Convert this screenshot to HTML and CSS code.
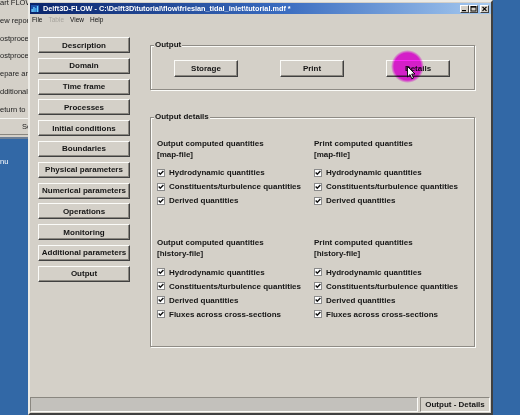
FILE: index.html
```html
<!DOCTYPE html>
<html>
<head>
<meta charset="utf-8">
<title>Delft3D-FLOW</title>
<link rel="stylesheet" href="styles.css">
</head>
<body>
<div class="desk">
  <div class="bg-left">
    <div class="bg-menu">
      <div class="bg-item">art FLOW</div>
      <div class="bg-item">ew report</div>
      <div class="bg-item">ostproces</div>
      <div class="bg-item">ostproces</div>
      <div class="bg-item">epare an</div>
      <div class="bg-item">dditional</div>
      <div class="bg-item bg-last">eturn to D</div>
      <div class="bg-btn">Se</div>
    </div>
    <div class="bg-blue"><span>nu</span></div>
  </div>

  <div class="win">
    <div class="titlebar">
      <svg class="appicon" viewBox="0 0 8 7" width="8" height="7">
        <rect x="0" y="0" width="8" height="7" fill="#1d4fa8"/>
        <rect x="0.5" y="4" width="1.3" height="3" fill="#6fd3ff"/>
        <rect x="2.3" y="2" width="1.3" height="5" fill="#6fd3ff"/>
        <rect x="4.1" y="3" width="1.3" height="4" fill="#3fa9f0"/>
        <rect x="5.9" y="1" width="1.3" height="6" fill="#6fd3ff"/>
      </svg>
      <span class="title">Delft3D-FLOW - C:\Delft3D\tutorial\flow\friesian_tidal_inlet\tutorial.mdf *</span>
      <div class="wbtns">
        <span class="wbtn"><svg viewBox="0 0 9 8" width="9" height="8"><rect x="2" y="5" width="4" height="1.2" fill="#000"/></svg></span>
        <span class="wbtn"><svg viewBox="0 0 9 8" width="9" height="8"><rect x="2" y="1.5" width="5" height="4.5" fill="none" stroke="#000" stroke-width="0.9"/><rect x="2" y="1.5" width="5" height="1.1" fill="#000"/></svg></span>
        <span class="wbtn wclose"><svg viewBox="0 0 9 8" width="9" height="8"><path d="M2.5 1.8 L6.5 5.8 M6.5 1.8 L2.5 5.8" stroke="#000" stroke-width="1.2"/></svg></span>
      </div>
    </div>
    <div class="menubar">
      <span>File</span><span class="dis">Table</span><span>View</span><span>Help</span>
    </div>

    <div class="body">
      <nav class="nav">
        <button class="btn">Description</button>
        <button class="btn">Domain</button>
        <button class="btn">Time frame</button>
        <button class="btn">Processes</button>
        <button class="btn">Initial conditions</button>
        <button class="btn">Boundaries</button>
        <button class="btn">Physical parameters</button>
        <button class="btn">Numerical parameters</button>
        <button class="btn">Operations</button>
        <button class="btn">Monitoring</button>
        <button class="btn">Additional parameters</button>
        <button class="btn">Output</button>
      </nav>

      <div class="main">
        <fieldset class="grp">
          <legend>Output</legend>
          <div class="btnrow">
            <button class="btn obtn">Storage</button>
            <button class="btn obtn">Print</button>
            <button class="btn obtn">Details</button>
          </div>
        </fieldset>

        <fieldset class="grp grp-details">
          <legend>Output details</legend>
          <div class="dgrid">
            <div class="blk">
              <div class="hdr">Output computed quantities<br>[map-file]</div>
              <ul class="checks">
                <li><svg class="cb" viewBox="0 0 8 8"><rect x="0.5" y="0.5" width="7" height="7" fill="#fff" stroke="#8a8a8a"/><path d="M1.7 3.6 L3.3 5.3 L6.4 2.1" fill="none" stroke="#111" stroke-width="1.4"/></svg>Hydrodynamic quantities</li>
                <li><svg class="cb" viewBox="0 0 8 8"><rect x="0.5" y="0.5" width="7" height="7" fill="#fff" stroke="#8a8a8a"/><path d="M1.7 3.6 L3.3 5.3 L6.4 2.1" fill="none" stroke="#111" stroke-width="1.4"/></svg>Constituents/turbulence quantities</li>
                <li><svg class="cb" viewBox="0 0 8 8"><rect x="0.5" y="0.5" width="7" height="7" fill="#fff" stroke="#8a8a8a"/><path d="M1.7 3.6 L3.3 5.3 L6.4 2.1" fill="none" stroke="#111" stroke-width="1.4"/></svg>Derived quantities</li>
              </ul>
            </div>
            <div class="blk">
              <div class="hdr">Print computed quantities<br>[map-file]</div>
              <ul class="checks">
                <li><svg class="cb" viewBox="0 0 8 8"><rect x="0.5" y="0.5" width="7" height="7" fill="#fff" stroke="#8a8a8a"/><path d="M1.7 3.6 L3.3 5.3 L6.4 2.1" fill="none" stroke="#111" stroke-width="1.4"/></svg>Hydrodynamic quantities</li>
                <li><svg class="cb" viewBox="0 0 8 8"><rect x="0.5" y="0.5" width="7" height="7" fill="#fff" stroke="#8a8a8a"/><path d="M1.7 3.6 L3.3 5.3 L6.4 2.1" fill="none" stroke="#111" stroke-width="1.4"/></svg>Constituents/turbulence quantities</li>
                <li><svg class="cb" viewBox="0 0 8 8"><rect x="0.5" y="0.5" width="7" height="7" fill="#fff" stroke="#8a8a8a"/><path d="M1.7 3.6 L3.3 5.3 L6.4 2.1" fill="none" stroke="#111" stroke-width="1.4"/></svg>Derived quantities</li>
              </ul>
            </div>
            <div class="blk">
              <div class="hdr">Output computed quantities<br>[history-file]</div>
              <ul class="checks">
                <li><svg class="cb" viewBox="0 0 8 8"><rect x="0.5" y="0.5" width="7" height="7" fill="#fff" stroke="#8a8a8a"/><path d="M1.7 3.6 L3.3 5.3 L6.4 2.1" fill="none" stroke="#111" stroke-width="1.4"/></svg>Hydrodynamic quantities</li>
                <li><svg class="cb" viewBox="0 0 8 8"><rect x="0.5" y="0.5" width="7" height="7" fill="#fff" stroke="#8a8a8a"/><path d="M1.7 3.6 L3.3 5.3 L6.4 2.1" fill="none" stroke="#111" stroke-width="1.4"/></svg>Constituents/turbulence quantities</li>
                <li><svg class="cb" viewBox="0 0 8 8"><rect x="0.5" y="0.5" width="7" height="7" fill="#fff" stroke="#8a8a8a"/><path d="M1.7 3.6 L3.3 5.3 L6.4 2.1" fill="none" stroke="#111" stroke-width="1.4"/></svg>Derived quantities</li>
                <li><svg class="cb" viewBox="0 0 8 8"><rect x="0.5" y="0.5" width="7" height="7" fill="#fff" stroke="#8a8a8a"/><path d="M1.7 3.6 L3.3 5.3 L6.4 2.1" fill="none" stroke="#111" stroke-width="1.4"/></svg>Fluxes across cross-sections</li>
              </ul>
            </div>
            <div class="blk">
              <div class="hdr">Print computed quantities<br>[history-file]</div>
              <ul class="checks">
                <li><svg class="cb" viewBox="0 0 8 8"><rect x="0.5" y="0.5" width="7" height="7" fill="#fff" stroke="#8a8a8a"/><path d="M1.7 3.6 L3.3 5.3 L6.4 2.1" fill="none" stroke="#111" stroke-width="1.4"/></svg>Hydrodynamic quantities</li>
                <li><svg class="cb" viewBox="0 0 8 8"><rect x="0.5" y="0.5" width="7" height="7" fill="#fff" stroke="#8a8a8a"/><path d="M1.7 3.6 L3.3 5.3 L6.4 2.1" fill="none" stroke="#111" stroke-width="1.4"/></svg>Constituents/turbulence quantities</li>
                <li><svg class="cb" viewBox="0 0 8 8"><rect x="0.5" y="0.5" width="7" height="7" fill="#fff" stroke="#8a8a8a"/><path d="M1.7 3.6 L3.3 5.3 L6.4 2.1" fill="none" stroke="#111" stroke-width="1.4"/></svg>Derived quantities</li>
                <li><svg class="cb" viewBox="0 0 8 8"><rect x="0.5" y="0.5" width="7" height="7" fill="#fff" stroke="#8a8a8a"/><path d="M1.7 3.6 L3.3 5.3 L6.4 2.1" fill="none" stroke="#111" stroke-width="1.4"/></svg>Fluxes across cross-sections</li>
              </ul>
            </div>
          </div>
        </fieldset>
      </div>
    </div>

    <div class="statusbar">
      <div class="panel panel-main"></div>
      <div class="panel panel-right">Output - Details</div>
    </div>
  </div>

  <div class="bg-right"></div>

  <div class="spot"></div>
  <svg class="cursor" viewBox="0 0 9 14" width="9" height="14">
    <path d="M0.5 0.5 L0.5 11 L3 8.6 L4.8 12.8 L6.5 12 L4.7 8 L8 8 Z" fill="#fff" stroke="#000" stroke-width="0.9" stroke-linejoin="round"/>
  </svg>
</div>
</body>
</html>
```

FILE: styles.css
```css
* { box-sizing: border-box; }

html, body {
  margin: 0;
  padding: 0;
}

body {
  width: 520px;
  height: 415px;
  overflow: hidden;
  background: #3268a6;
  font-family: "Liberation Sans", Arial, sans-serif;
  color: #151515;
}

.desk {
  position: relative;
  display: flex;
  width: 520px;
  height: 415px;
}

/* ---------- background application strip ---------- */
.bg-left {
  width: 28px;
  flex: none;
  display: flex;
  flex-direction: column;
  overflow: hidden;
}

.bg-menu {
  height: 137px;
  flex: none;
  background: #d4d0c8;
  overflow: hidden;
  font-size: 7.5px;
  color: #222;
}

.bg-item {
  height: 17.8px;
  line-height: 8px;
  white-space: nowrap;
}

.bg-item:first-child { margin-top: -1px; }

.bg-item.bg-last {
  height: 13px;
  border-bottom: 1px solid #f4f4f0;
}

.bg-btn {
  height: 15px;
  margin-top: 1px;
  line-height: 14px;
  padding-left: 22px;
  white-space: nowrap;
  border-bottom: 1px solid #8a8780;
}

.bg-blue {
  flex: 1;
  background: #3268a6;
  border-top: 2px solid #6d7f96;
  padding-top: 19px;
  color: #fff;
  font-size: 7.5px;
  line-height: 8px;
}

.bg-right {
  flex: 1;
  background: #3268a6;
}

/* ---------- window ---------- */
.win {
  width: 465px;
  flex: none;
  display: flex;
  flex-direction: column;
  background: #d4d0c8;
  border: 2px solid;
  border-color: #ecebe6 #404040 #404040 #ecebe6;
  padding: 1px 0 1px 0;
}

.titlebar {
  height: 11px;
  flex: none;
  display: flex;
  align-items: center;
  padding: 0 2px 0 1px;
  background: linear-gradient(to right, #0a246a 0%, #3a6cc0 55%, #a6caf0 100%);
}

.appicon {
  display: block;
  flex: none;
  margin-right: 4px;
}

.title {
  color: #fff;
  font-weight: bold;
  font-size: 7.3px;
  line-height: 11px;
  white-space: nowrap;
}

.wbtns {
  margin-left: auto;
  display: flex;
  align-items: center;
}

.wbtn {
  width: 9px;
  height: 8px;
  display: block;
  background: #d4d0c8;
  border: 1px solid;
  border-color: #fff #404040 #404040 #fff;
  overflow: hidden;
}

.wbtn svg {
  display: block;
  margin: -1px 0 0 -1px;
}

.wclose { margin-left: 2px; }

.menubar {
  height: 11px;
  flex: none;
  display: flex;
  align-items: center;
  gap: 6px;
  padding-left: 2px;
  font-size: 6.5px;
  color: #111;
}

.menubar .dis {
  color: #a8a59e;
}

/* ---------- body ---------- */
.body {
  flex: 1;
  display: flex;
  padding-left: 8px;
  min-height: 0;
}

.nav {
  width: 92px;
  flex: none;
  display: flex;
  flex-direction: column;
  gap: 4.8px;
  padding-top: 12px;
}

.btn {
  height: 16px;
  margin: 0;
  padding: 0;
  font-family: "Liberation Sans", Arial, sans-serif;
  font-weight: bold;
  font-size: 8px;
  color: #151515;
  background: #d4d0c8;
  border: 1px solid;
  border-color: #fbfbf8 #404040 #404040 #fbfbf8;
  box-shadow: inset -1px -1px 0 #8a8780;
  white-space: nowrap;
}

.main {
  width: 325px;
  flex: none;
  margin-left: 20px;
  padding-top: 15px;
  display: flex;
  flex-direction: column;
}

.grp {
  margin: 0;
  padding: 0;
  min-width: 0;
  border: 1px solid #8f8c86;
  box-shadow: inset 1px 1px 0 #fbfbf8, 1px 1px 0 #fbfbf8;
}

.grp legend {
  margin-left: 3px;
  padding: 0 1px;
  font-weight: bold;
  font-size: 8px;
  line-height: 10px;
  background: #d4d0c8;
  color: #151515;
}

.btnrow {
  display: flex;
  justify-content: space-between;
  padding: 10px 24px 12px 23px;
}

.obtn {
  width: 64px;
  height: 17px;
}

.grp-details {
  margin-top: 22px;
}

.dgrid {
  display: grid;
  grid-template-columns: 157px 1fr;
  row-gap: 29.5px;
  padding: 15.5px 6px 25px 6px;
}

.hdr {
  font-weight: bold;
  font-size: 8px;
  line-height: 11px;
  white-space: nowrap;
}

.checks {
  list-style: none;
  margin: 6px 0 0 0;
  padding: 0;
}

.checks li {
  height: 14px;
  display: flex;
  align-items: center;
  gap: 4px;
  font-weight: bold;
  font-size: 8px;
  white-space: nowrap;
}

.cb {
  width: 8px;
  height: 8px;
  flex: none;
  display: block;
}

/* ---------- status bar ---------- */
.statusbar {
  height: 15px;
  flex: none;
  display: flex;
  gap: 2px;
  padding-right: 1px;
}

.panel {
  height: 15px;
  border: 1px solid;
  border-color: #8a8780 #fbfbf8 #fbfbf8 #8a8780;
}

.panel-main {
  flex: 1;
  background: #c3c1bc;
}

.panel-right {
  width: 70px;
  flex: none;
  font-weight: bold;
  font-size: 8px;
  line-height: 13px;
  text-align: center;
  white-space: nowrap;
}

/* ---------- overlays: click highlight and mouse pointer ---------- */
.spot {
  position: absolute;
  left: 391px;
  top: 50px;
  width: 33px;
  height: 33px;
  border-radius: 50%;
  background: radial-gradient(circle closest-side, #ff26ff 82%, rgba(255, 38, 255, 0) 100%);
  mix-blend-mode: multiply;
  pointer-events: none;
}

.cursor {
  position: absolute;
  left: 407px;
  top: 66px;
  display: block;
}
```
